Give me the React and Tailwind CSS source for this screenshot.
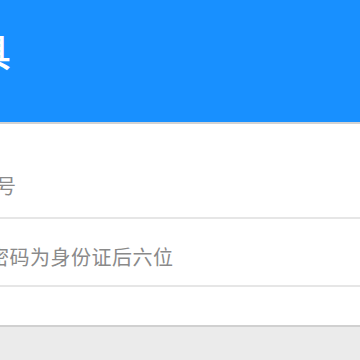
import React from "react";

function App() {
  return (
    <div className="w-[360px] h-[360px] overflow-hidden bg-[#ebebeb] font-['Noto_Sans_CJK_SC','Noto_Sans',sans-serif]">
      {/* Header */}
      <div className="h-[122px] bg-[#1890ff] pt-[31px] whitespace-nowrap">
        <h1 className="-ml-[141px] text-[38px] leading-none text-white font-medium">
          查询工具
        </h1>
      </div>
      <div className="h-[2px] bg-[#d2d2d2]" />

      {/* Form */}
      <div className="bg-white">
        <div className="h-[95px] pt-[52px] border-b-2 border-[#e6e6e6] whitespace-nowrap">
          <span className="block -ml-[86px] text-[20px] leading-[20px] tracking-[0.5px] text-[#8a8a8a]">
            请输入账号
          </span>
        </div>
        <div className="h-[68px] pt-[28px] border-b-2 border-[#e6e6e6] whitespace-nowrap">
          <span className="block -ml-[52px] text-[20px] leading-[20px] tracking-[0.5px] text-[#8a8a8a]">
            初始密码为身份证后六位
          </span>
        </div>
        <div className="h-[40px] border-b-2 border-[#d0d0d0]" />
      </div>
    </div>
  );
}

export default App;
